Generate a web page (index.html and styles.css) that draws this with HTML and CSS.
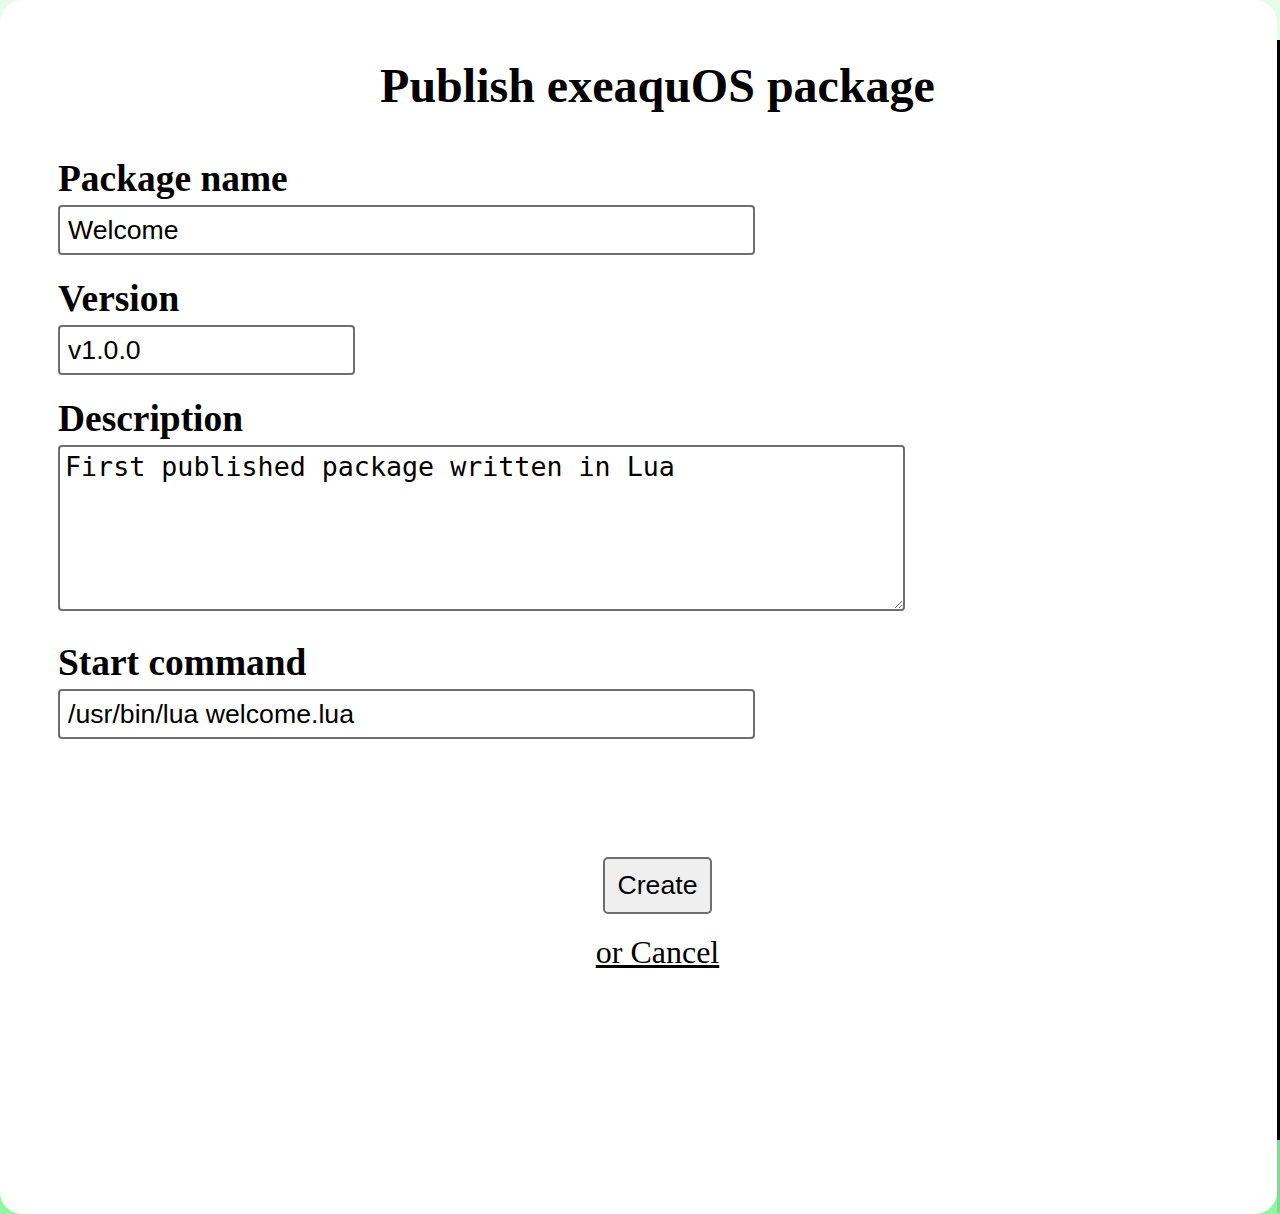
FILE: index.html
```html
<!DOCTYPE html>
<html lang="en">
<head>
<meta charset="utf-8">
<title>Publish exeaquOS package</title>
<link rel="stylesheet" href="styles.css">
</head>
<body>
<main class="card">
  <h1 class="title">Publish exeaquOS package</h1>
  <form class="form">
    <label class="label" for="name">Package name</label>
    <input class="field field-wide" id="name" type="text" value="Welcome">
    <label class="label" for="version">Version</label>
    <input class="field field-short" id="version" type="text" value="v1.0.0">
    <label class="label" for="desc">Description</label>
    <textarea class="area" id="desc">First published package written in Lua</textarea>
    <label class="label" for="cmd">Start command</label>
    <input class="field field-wide" id="cmd" type="text" value="/usr/bin/lua welcome.lua">
    <div class="actions">
      <button class="button" type="button">Create</button>
      <a class="cancel" href="#">or Cancel</a>
    </div>
  </form>
</main>
<div class="strip"></div>
</body>
</html>
```

FILE: styles.css
```css
html, body {
  margin: 0;
  padding: 0;
}
body {
  height: 1214px;
  display: flex;
  align-items: flex-start;
  overflow: hidden;
  background: linear-gradient(#e4fde8 0%, #c4f9cc 50%, #8ef79f 100%);
  font-family: "Liberation Serif", "Times New Roman", serif;
  color: #000;
}
.card {
  box-sizing: border-box;
  width: 1277px;
  height: 1214px;
  flex: none;
  background: #fff;
  border-radius: 22px;
  padding: 58px 20px 0 58px;
}
.strip {
  flex: none;
  width: 3px;
  height: 1173px;
  margin-top: 40px;
  background: linear-gradient(#000 0, #000 1100px, #80da92 1100px);
}
.title {
  margin: 0;
  font-size: 48px;
  font-weight: bold;
  text-align: center;
  line-height: 55px;
}
.form {
  display: flex;
  flex-direction: column;
  align-items: flex-start;
  margin-top: 49px;
}
.label {
  display: block;
  font-size: 37.44px;
  font-weight: bold;
  line-height: 33px;
  margin-bottom: 10px;
}
.field {
  box-sizing: border-box;
  height: 50px;
  margin: 0 0 27px 0;
  padding: 0 8px;
  border: 2px solid #6e6e6e;
  border-radius: 4px;
  font-family: "Liberation Sans", Arial, sans-serif;
  font-size: 26.67px;
  color: #000;
  background: #fff;
}
.field-wide { width: 697px; }
.field-short { width: 297px; }
.area {
  box-sizing: border-box;
  width: 847px;
  height: 166px;
  margin: 0 0 35px 0;
  padding: 4px 5px;
  border: 2px solid #6e6e6e;
  border-radius: 4px;
  font-family: "DejaVu Sans Mono", monospace;
  font-size: 26.67px;
  line-height: 1.2;
  color: #000;
  background: #fff;
}
.actions {
  align-self: stretch;
  display: flex;
  flex-direction: column;
  align-items: center;
  margin-top: 91px;
  gap: 20px;
}
.button {
  box-sizing: border-box;
  height: 57px;
  padding: 0 12px;
  border: 2px solid #6e6e6e;
  border-radius: 5px;
  background: #efefef;
  font-family: "Liberation Sans", Arial, sans-serif;
  font-size: 26.67px;
  color: #000;
}
.cancel {
  font-size: 32px;
  line-height: 37px;
  color: #000;
  text-decoration: underline;
}
```
